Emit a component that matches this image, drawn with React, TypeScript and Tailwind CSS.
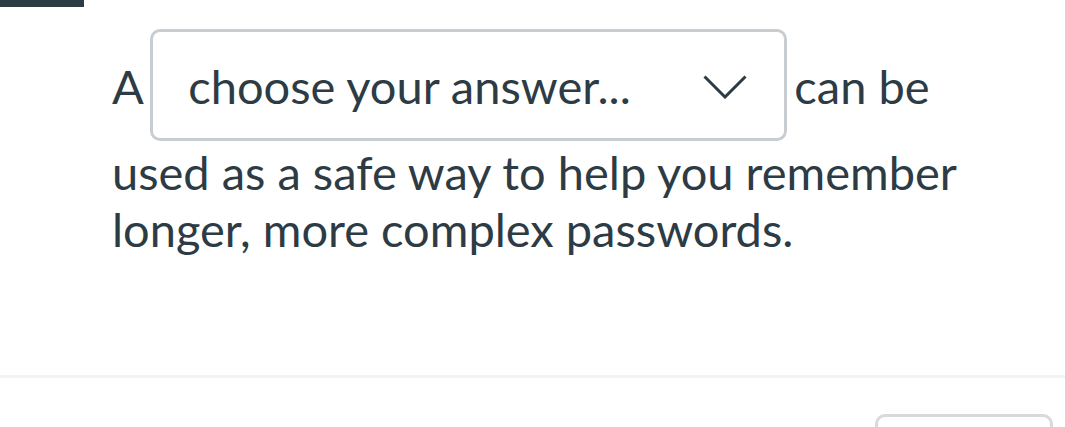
import React from 'react';

const ChevronDown: React.FC = () => (
  <svg width="44" height="24" viewBox="0 0 44 24" fill="none" className="shrink-0">
    <polyline points="1.5,1.5 22,22 42.5,1.5" stroke="#2d3b45" strokeWidth="3" strokeLinecap="butt" strokeLinejoin="miter" />
  </svg>
);

export default function App() {
  return (
    <div className="min-h-screen bg-white font-['Lato',_'Noto_Sans',_sans-serif] text-[#2d3b45]">
      {/* progress bar */}
      <div className="h-[7px] w-[84px] bg-[#2d3b45]" />

      {/* question */}
      <p className="w-[1000px] pl-[112px] pt-[22px] text-[47px] leading-[57px]">
        A{' '}
        <span className="-ml-[4px] -mr-[5px] mb-[3px] inline-flex w-[637px] items-center justify-between rounded-[10px] border-[3px] border-[#c7cdd1] pt-[26px] pb-[23px] pl-[35px] pr-[37px] align-baseline">
          <span>choose your answer...</span>
          <ChevronDown />
        </span>{' '}
        can be used as a safe way to help you remember longer, more complex passwords.
      </p>

      {/* footer */}
      <div className="mt-[117px] h-[3px] w-full bg-[#f3f3f3]" />
      <div className="flex justify-end pr-[12px] pt-[36px]">
        <div className="h-[40px] w-[178px] rounded-[10px] border-[3px] border-[#d9d9d9]" />
      </div>
    </div>
  );
}
